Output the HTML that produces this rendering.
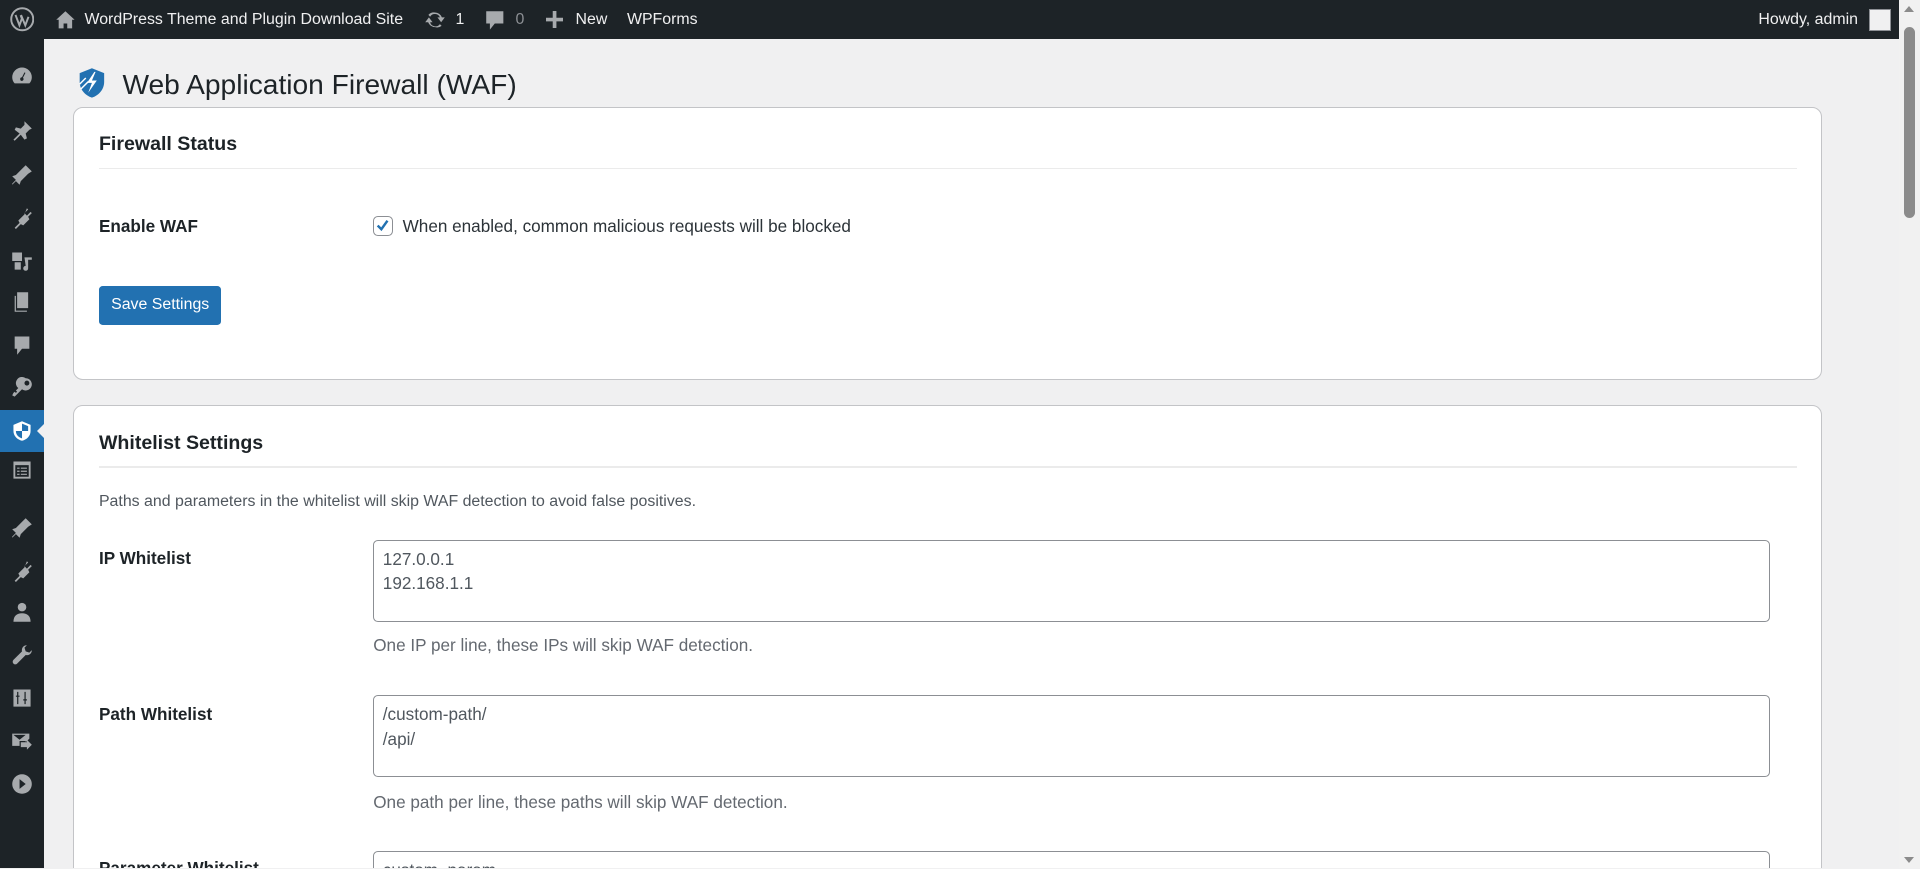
<!DOCTYPE html>
<html><head><meta charset="utf-8">
<style>
html{zoom:1.22449;overflow:hidden;height:709px}
*{box-sizing:border-box;margin:0;padding:0}
body{width:1568px;height:709px;overflow:hidden;background:#f0f0f1;font-family:"Liberation Sans",sans-serif;color:#1d2327}
#wrap{position:relative;width:1568px;height:709px;overflow:hidden;background:#f0f0f1}
#bar{position:absolute;left:0;top:0;width:1551px;height:32px;background:#1d2327;color:#f0f0f1;font-size:13px}
#bar span,#bar svg{position:absolute}
#side{position:absolute;left:0;top:32px;width:36px;height:677px;background:#1d2327}
#side svg{position:absolute;left:9px;width:18px;height:18px;fill:#a7aaad}
#active{position:absolute;left:0;top:303px;width:36px;height:34px;background:#2271b1}
#active:after{content:"";position:absolute;right:0;top:11px;border:6px solid transparent;border-right-color:#f0f0f1}
#sb{position:absolute;left:1551px;top:0;width:17px;height:709px;background:#f1f1f1}
#thumb{position:absolute;left:4px;top:22px;width:9px;height:156px;background:#8b8b8b;border-radius:5px}
.card{position:absolute;left:60px;width:1428px;background:#fff;border:1px solid #c3c4c7;border-radius:8px;overflow:hidden}
.h{position:absolute;left:20px;font-size:16px;font-weight:bold}
.sep{position:absolute;left:20px;right:20px;height:1px;background:#ebebeb}
.lab{position:absolute;left:20px;font-size:14px;font-weight:bold}
.ta{position:absolute;left:244px;width:1141px;height:67px;border:1px solid #8c8f94;border-radius:4px;padding:5px 7px;font-size:14px;line-height:20px;color:#50575e}
.help{position:absolute;left:244px;font-size:14px;color:#646970}
</style></head><body><div id="wrap">
<div id="bar">
<svg style="left:8px;top:6px" width="20" height="20" viewBox="0 0 20 20"><circle cx="10" cy="10" r="9" fill="none" stroke="#a7aaad" stroke-width="1.6"/><path d="M4.5 6.5l3.2 8.5 2-5.5-1-2.8M9 6.5l3.5 8.5 2.6-7" fill="none" stroke="#a7aaad" stroke-width="1.6"/></svg>
<svg style="left:45px;top:8px" width="17" height="16" viewBox="0 0 17 16"><path d="M8.5 1L1 8h2v7h4v-4h3v4h4V8h2z" fill="#a7aaad"/></svg>
<span style="left:69px;top:9px">WordPress Theme and Plugin Download Site</span>
<svg style="left:346px;top:8px" width="18" height="16" viewBox="0 0 18 16"><path d="M9 2a6 6 0 015.6 4H17l-3 4-3-4h2A4.5 4.5 0 005 5.5L3.6 4A6 6 0 019 2zM9 14a6 6 0 01-5.6-4H1l3-4 3 4H5a4.5 4.5 0 008 1.5l1.4 1.5A6 6 0 019 14z" fill="#a7aaad"/></svg>
<span style="left:372px;top:9px">1</span>
<svg style="left:396px;top:8px" width="16" height="18" viewBox="0 0 16 18"><path d="M1 1h14v10H8l-4 5v-5H1z" fill="#a7aaad"/></svg>
<span style="left:421px;top:9px;color:#8c8f94">0</span>
<svg style="left:446px;top:9px" width="14" height="14" viewBox="0 0 14 14"><path d="M5.5 0h3v5.5H14v3H8.5V14h-3V8.5H0v-3h5.5z" fill="#a7aaad"/></svg>
<span style="left:470px;top:9px">New</span>
<span style="left:512px;top:9px">WPForms</span>
<span style="left:1436px;top:9px">Howdy, admin</span>
<span style="left:1526px;top:7px;width:18px;height:18px;background:#f0f0f1;border:1px solid #8c8f94"></span>
</div>
<div id="side">
<svg style="top:21px" viewBox="0 0 18 18"><path d="M9 2a8 8 0 00-8 8c0 2 .7 3.7 2 5h12c1.3-1.3 2-3 2-5a8 8 0 00-8-8zm0 11a1.5 1.5 0 110-3l2-4 .8.4-2 4A1.5 1.5 0 019 13z"/></svg>
<svg style="top:66px" viewBox="0 0 18 18"><path d="M11 1l6 6-2 1-3 3 1 4-2 1-3-4-5 5-1-1 5-5-4-3 1-2 4 1 3-3z"/></svg>
<svg style="top:102px" viewBox="0 0 18 18"><path d="M12 1l5 5-3 2-6 6-1 3-3-3-3 3 0-1 3-3-3-3 3-1 6-6z"/></svg>
<svg style="top:137px" viewBox="0 0 18 18"><path d="M13 1l1 1-3 3 2 2 3-3 1 1-3 3 1 2-5 5-2-1-4 4-1-1 4-4-1-2 5-5z"/></svg>
<svg style="top:172px" viewBox="0 0 18 18"><path d="M1 2h8v7H1zM3 10h5v6H3zM11 6h6v2h-3v7a2 2 0 11-2-2z"/></svg>
<svg style="top:206px" viewBox="0 0 18 18"><path d="M5 1h9v13H5zM3 4h1v12h9v1H3z"/></svg>
<svg style="top:241px" viewBox="0 0 18 18"><path d="M3 2h12v10H9l-4 5v-5H3z"/></svg>
<svg style="top:276px" viewBox="0 0 18 18"><path d="M12 1a5 5 0 11-3 9l-6 6-2-1 1-2 1-1 1 1 1-1-1-1 2-2A5 5 0 0112 1zm1 2a2 2 0 100 4 2 2 0 000-4z"/></svg>
<div id="active"><svg style="position:absolute;left:9px;top:8px;width:18px;height:18px" viewBox="0 0 18 18"><path d="M9 1l7 3v5c0 4-3 7-7 8-4-1-7-4-7-8V4z" fill="#fff"/><path d="M9 3v6H4c0 3 2 5 5 6V9h5V5z" fill="#2271b1"/></svg></div>
<svg style="top:343px" viewBox="0 0 18 18"><path d="M2 2h14v14H2zm1.5 3v9.5h11V5zM5 7h2v1H5zm3 0h5v1H8zM5 9.5h2v1H5zm3 0h5v1H8zM5 12h2v1H5zm3 0h5v1H8z"/></svg>
<svg style="top:390px" viewBox="0 0 18 18"><path d="M12 1l5 5-3 2-6 6-1 3-3-3-3 3 0-1 3-3-3-3 3-1 6-6z"/></svg>
<svg style="top:425px" viewBox="0 0 18 18"><path d="M13 1l1 1-3 3 2 2 3-3 1 1-3 3 1 2-5 5-2-1-4 4-1-1 4-4-1-2 5-5z"/></svg>
<svg style="top:459px" viewBox="0 0 18 18"><circle cx="9" cy="5" r="3.5"/><path d="M2 17c0-5 3-7 7-7s7 2 7 7z"/></svg>
<svg style="top:494px" viewBox="0 0 18 18"><path d="M13 1a4 4 0 00-4 5L2 13a2 2 0 003 3l7-7a4 4 0 005-4l-2 2-3-1-1-3 2-2z"/></svg>
<svg style="top:529px" viewBox="0 0 18 18"><path d="M2 2h14v14H2zm3 2v3H4v1h1v6h1V8h1V7H6V4zm6 0v6h-1v1h1v3h1v-3h1v-1h-1V4z"/></svg>
<svg style="top:564px" viewBox="0 0 18 18"><path d="M1 3h14v4l-3 3v-1H7v4H1zm1 1l5 4 5-4zM8 10h5V8l4 4-4 4v-2H8z"/></svg>
<svg style="top:599px" viewBox="0 0 18 18"><circle cx="9" cy="9" r="8"/><path d="M7 5l5 4-5 4z" fill="#1d2327"/></svg>
</div>
<svg style="position:absolute;left:62px;top:55px" width="26" height="26" viewBox="0 0 26 26"><path d="M13 1l10 4v7c0 6-4 11-10 13C7 23 3 18 3 12V5z" fill="#2271b1"/><path d="M15 4l-6 9h4l-3 8 7-10h-4l3-7z" fill="#fff"/><path d="M4 18l6-6M3 14l5-5" stroke="#fff" stroke-width="1.2"/></svg>
<div style="position:absolute;left:100px;top:56px;font-size:23px;color:#1d2327">Web Application Firewall (WAF)</div>
<div class="card" style="top:87px;height:223px">
<div class="h" style="top:21px">Firewall Status</div>
<div class="sep" style="top:49px"></div>
<div class="lab" style="top:89px">Enable WAF</div>
<div style="position:absolute;left:244px;top:89px;width:16px;height:16px;border:1px solid #8c8f94;border-radius:4px"><svg width="14" height="14" viewBox="0 0 14 14" style="position:absolute;left:0;top:0"><path d="M3 7l3 3 5-7" fill="none" stroke="#2271b1" stroke-width="2"/></svg></div>
<div style="position:absolute;left:268px;top:89px;font-size:14px;color:#2c3338">When enabled, common malicious requests will be blocked</div>
<div style="position:absolute;left:20px;top:146px;width:100px;height:32px;background:#2271b1;border-radius:3px;color:#fff;font-size:13px;line-height:31px;text-align:center">Save Settings</div>
</div>
<div class="card" style="top:331px;height:378px;border-bottom:0;border-radius:8px 8px 0 0">
<div class="h" style="top:21px">Whitelist Settings</div>
<div class="sep" style="top:49px"></div>
<div style="position:absolute;left:20px;top:71px;font-size:13px;color:#50575e">Paths and parameters in the whitelist will skip WAF detection to avoid false positives.</div>
<div class="lab" style="top:116px">IP Whitelist</div>
<div class="ta" style="top:109px">127.0.0.1<br>192.168.1.1</div>
<div class="help" style="top:187px">One IP per line, these IPs will skip WAF detection.</div>
<div class="lab" style="top:243px">Path Whitelist</div>
<div class="ta" style="top:236px">/custom-path/<br>/api/</div>
<div class="help" style="top:315px">One path per line, these paths will skip WAF detection.</div>
<div class="lab" style="top:369px">Parameter Whitelist</div>
<div class="ta" style="top:363px">custom_param</div>
</div>
<div id="sb"><div style="position:absolute;left:4px;top:5px;border:4.5px solid transparent;border-bottom:5px solid #8b8b8b;border-top:0"></div><div id="thumb"></div><div style="position:absolute;left:4px;bottom:4px;border:4.5px solid transparent;border-top:5px solid #8b8b8b;border-bottom:0"></div></div>
</div></body></html>
